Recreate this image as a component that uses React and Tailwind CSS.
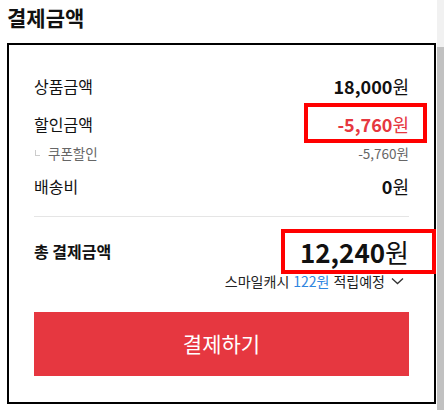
import React from "react";

const font = { fontFamily: '"Noto Sans CJK KR", "Noto Sans", sans-serif' };

const Row = ({ label, children, className = "" }) => (
  <div className={`flex items-center justify-between ${className}`}>
    <span className="text-[16px] text-[#111]">{label}</span>
    {children}
  </div>
);

const Won = ({ value, className = "", wonClass = "" }) => (
  <span className={`flex items-baseline ${className}`}>
    <span className="font-bold">{value}</span>
    <span className={`font-normal ${wonClass}`}>원</span>
  </span>
);

const App = () => {
  return (
    <div className="flex w-[444px] h-[410px] bg-white overflow-hidden" style={font}>
      <div className="relative w-[437px] h-full">
        <h2 className="pl-[7px] pt-[3px] h-[31px] text-[21px] leading-[28px] font-bold text-[#111]">
          결제금액
        </h2>
        <div className="mt-[12px] ml-[7px] w-[429px] border-2 border-black px-[25px] pt-[22px] pb-[26px]">
          <Row label="상품금액" className="h-[38px]">
            <Won value="18,000" className="text-[18px] text-[#111]" />
          </Row>
          <Row label="할인금액" className="h-[38px]">
            <Won value="-5,760" className="text-[18px] text-[#e63740]" />
          </Row>
          <div className="flex items-center justify-between h-[20px] text-[13.5px] text-[#666]">
            <span className="flex items-center">
              <span className="ml-[1px] mr-[8px] w-[5px] h-[6px] border-l border-b border-[#ccc]" />
              쿠폰할인
            </span>
            <span>-5,760원</span>
          </div>
          <Row label="배송비" className="h-[38px] mt-[4px]">
            <Won value="0" className="text-[18px] text-[#111]" />
          </Row>
          <div className="mt-[11px] h-px bg-[#e5e5e5]" />
          <div className="mt-[14px] h-[40px] flex items-center justify-between">
            <span className="text-[16px] font-bold text-[#111]">총 결제금액</span>
            <Won value="12,240" className="text-[26px] text-[#111]" />
          </div>
          <div className="h-[20px] flex items-center justify-end text-[14px] text-[#222]">
            <span>스마일캐시</span>
            <span className="ml-[4px] text-[#2f86e0]">122원</span>
            <span className="ml-[4px]">적립예정</span>
            <svg className="ml-[6px] mr-[5px]" width="13" height="8" viewBox="0 0 13 8" fill="none">
              <path d="M1 1.5 L6.5 6.5 L12 1.5" stroke="#333" strokeWidth="1.3" />
            </svg>
          </div>
          <button className="mt-[21px] w-full h-[64px] bg-[#e63740] text-white text-[21px] flex items-center justify-center">
            결제하기
          </button>
        </div>
        <div className="absolute left-[304px] top-[103px] w-[123px] h-[40px] border-4 border-[#ff0000]" />
        <div className="absolute left-[281px] top-[229px] w-[155px] h-[45px] border-4 border-[#ff0000]" />
      </div>
      <div className="w-[7px] h-full flex flex-col">
        <div className="h-[47px] bg-[#f1f1f1]" />
        <div className="flex-1 bg-[#c1c1c1]" />
      </div>
    </div>
  );
};

export default App;
